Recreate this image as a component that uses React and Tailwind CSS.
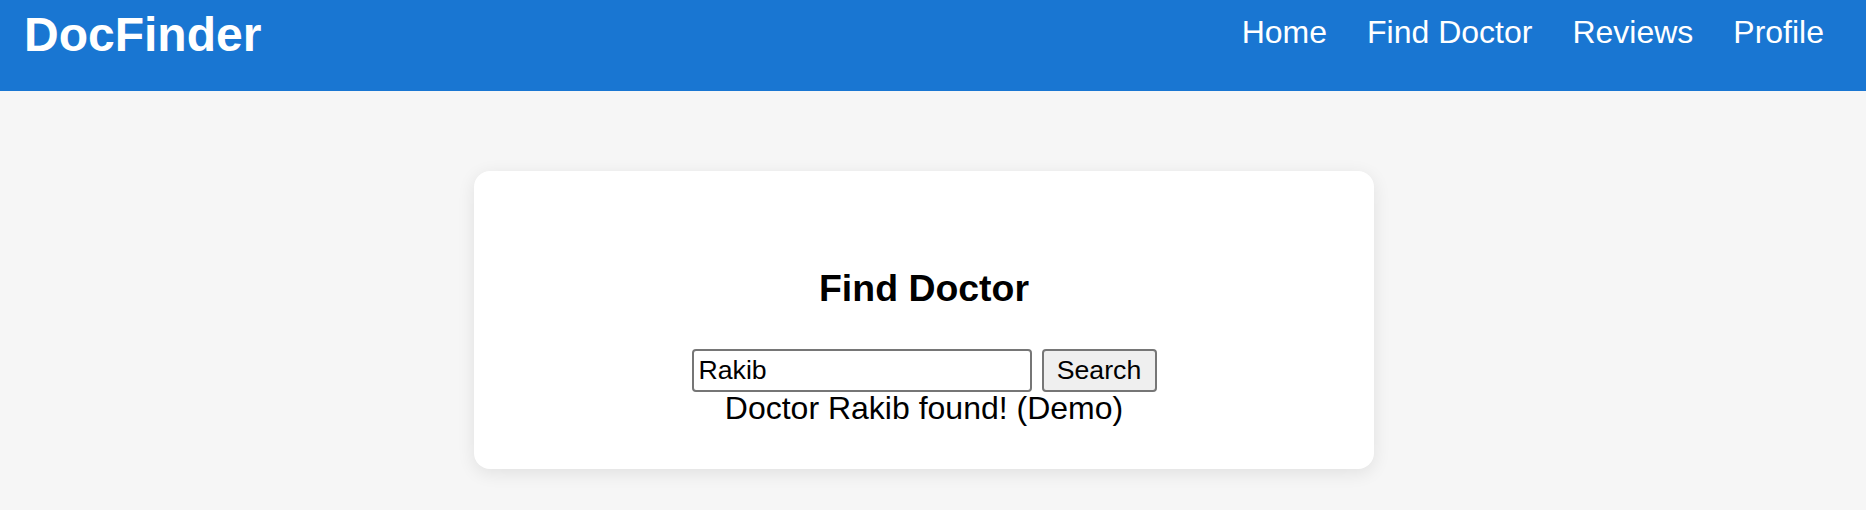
import React, { useState } from "react";

const App = () => {
  const [query, setQuery] = useState("Rakib");
  const [result, setResult] = useState("Doctor Rakib found! (Demo)");

  const handleSearch = () => {
    setResult(query ? `Doctor ${query} found! (Demo)` : "");
  };

  return (
    <div className="min-h-[510px] bg-[#f6f6f6] font-['Liberation_Sans',Arial,sans-serif] text-black">
      {/* Top bar */}
      <header className="flex h-[91px] items-start justify-between bg-[#1976d2] pl-[24px] pr-[42px] text-white">
        <h1 className="pt-[7px] text-[48px] font-bold leading-[55px]">DocFinder</h1>
        <nav className="flex gap-10 pt-[14px] text-[32px] leading-[37px]">
          <a href="#">Home</a>
          <a href="#">Find Doctor</a>
          <a href="#">Reviews</a>
          <a href="#">Profile</a>
        </nav>
      </header>

      {/* Search card */}
      <main className="ml-[474px] mt-[80px] flex h-[298px] w-[900px] flex-col items-center rounded-2xl bg-white pt-[96px] shadow-[0_4px_18px_rgba(0,0,0,0.09)]">
        <h3 className="text-[37.44px] font-bold leading-[43px]">Find Doctor</h3>

        <div className="mt-[39px] flex items-center">
          <input
            className="h-[43px] w-[340px] rounded-[4px] border-2 border-[#767676] bg-white pl-[5px] pr-[4px] text-[26.67px] outline-none"
            value={query}
            onChange={(e) => setQuery(e.target.value)}
          />
          <button
            type="button"
            onClick={handleSearch}
            className="ml-[10px] h-[43px] w-[115px] rounded-[4px] border-2 border-[#767676] bg-[#efefef] text-[26.67px] leading-none"
          >
            Search
          </button>
        </div>

        <div className="mt-[-2px] text-[32px] leading-[37px]">{result}</div>
      </main>
    </div>
  );
};

export default App;
